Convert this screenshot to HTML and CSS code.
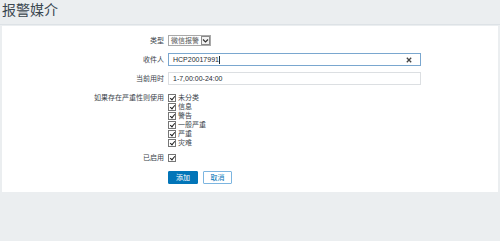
FILE: index.html
```html
<!DOCTYPE html>
<html lang="zh-CN">

<head>
    <meta charset="UTF-8">
    <meta name="viewport" content="width=device-width, initial-scale=1.0">
    <title>报警媒介</title>
    <link rel="stylesheet" href="styles.css">
</head>

<body>
    <header class="page-header">
        <h1>报警媒介</h1>
    </header>
    <div class="panel">
        <form class="media-form">
            <div class="row row-type">
                <label class="row-label">类型</label>
                <div class="select">
                    <span class="select-value">微信报警</span>
                    <span class="select-arrow">
                        <svg width="7" height="7" viewBox="0 0 7 7">
                            <path d="M1 2.5 L3.5 5 L6 2.5" fill="none" stroke="#333" stroke-width="1.2" />
                        </svg>
                    </span>
                </div>
            </div>
            <div class="row row-sendto">
                <label class="row-label">收件人</label>
                <div class="input input-active">
                    <span class="input-value">HCP20017991</span><span class="caret"></span>
                    <svg class="clear-icon" width="6" height="6" viewBox="0 0 6 6">
                        <path d="M0.8 0.8 L5.2 5.2 M5.2 0.8 L0.8 5.2" stroke="#444" stroke-width="1.3" />
                    </svg>
                </div>
            </div>
            <div class="row row-period">
                <label class="row-label">当前用时</label>
                <div class="input">
                    <span class="input-value">1-7,00:00-24:00</span>
                </div>
            </div>
            <div class="row row-severity">
                <label class="row-label">如果存在严重性则使用</label>
                <ul class="check-list">
                    <li><span class="check"></span>未分类</li>
                    <li><span class="check"></span>信息</li>
                    <li><span class="check"></span>警告</li>
                    <li><span class="check"></span>一般严重</li>
                    <li><span class="check"></span>严重</li>
                    <li><span class="check"></span>灾难</li>
                </ul>
            </div>
            <div class="row row-enabled">
                <label class="row-label">已启用</label>
                <span class="check"></span>
            </div>
            <div class="row row-buttons">
                <span class="row-label"></span>
                <button type="button" class="btn btn-primary">添加</button>
                <button type="button" class="btn btn-alt">取消</button>
            </div>
        </form>
    </div>
</body>

</html>
```

FILE: styles.css
```css
body {
    font-family: "Liberation Sans", "Noto Sans CJK SC", sans-serif;
    background-color: #ebeef0;
    color: #1f2c33;
    margin: 0;
    padding: 0;
}

.page-header {
    height: 24px;
    border-bottom: 1px solid #dde2e6;
}

.page-header h1 {
    margin: 0;
    padding: 1px 0 0 2px;
    font-size: 14px;
    font-weight: normal;
    line-height: 18px;
    color: #3b4750;
}

.panel {
    background-color: #fff;
    margin: 1px 2px 0 2px;
    padding: 9px 0 8px 0;
}

.media-form {
    font-size: 7px;
    color: #3a444b;
}

.row {
    display: flex;
    align-items: center;
    gap: 4px;
}

.row-label {
    width: 162px;
    text-align: right;
    flex: 0 0 162px;
    line-height: 9px;
}

.row-type {
    margin-bottom: 7px;
}

.row-sendto {
    margin-bottom: 6px;
}

.row-period {
    margin-bottom: 8px;
}

.row-severity {
    align-items: flex-start;
    margin-bottom: 6px;
}

.row-severity .row-label {
    margin-top: 0;
}

.row-enabled {
    margin-bottom: 9px;
}

.select {
    display: flex;
    align-items: center;
    height: 11px;
    box-sizing: border-box;
    border: 1px solid #a9a9a9;
    padding-left: 2px;
    gap: 2px;
}

.select-value {
    color: #555;
    line-height: 9px;
}

.select-arrow {
    display: flex;
    align-items: center;
    justify-content: center;
    width: 9px;
    height: 9px;
    box-sizing: border-box;
    border: 1px solid #8a8a8a;
    background-color: #f2f2f2;
}

.input {
    position: relative;
    display: flex;
    align-items: center;
    width: 253px;
    height: 13px;
    box-sizing: border-box;
    border: 1px solid #dcdfe2;
    padding-left: 4px;
}

.input-active {
    border-color: #7aa7cf;
}

.input-value {
    color: #1f2c33;
    line-height: 9px;
}

.caret {
    display: inline-block;
    width: 1px;
    height: 8px;
    background-color: #1f2c33;
}

.clear-icon {
    position: absolute;
    right: 8px;
    top: 3px;
}

.check-list {
    list-style: none;
    margin: 0;
    padding: 0;
}

.check-list li {
    display: flex;
    align-items: center;
    gap: 2px;
    height: 9px;
    line-height: 9px;
}

.check {
    position: relative;
    display: inline-block;
    width: 8px;
    height: 8px;
    box-sizing: border-box;
    border: 1px solid #767676;
    background-color: #fff;
}

.check::after {
    content: "";
    position: absolute;
    left: 2px;
    top: 0;
    width: 2px;
    height: 4px;
    border-right: 1.5px solid #222;
    border-bottom: 1.5px solid #222;
    transform: rotate(40deg);
}

.btn {
    font-family: "Liberation Sans", "Noto Sans CJK SC", sans-serif;
    font-size: 7px;
    height: 13px;
    padding: 0 6px;
    border-radius: 1px;
    cursor: pointer;
    line-height: 9px;
}

.btn-primary {
    background-color: #0275b8;
    border: 1px solid #0275b8;
    color: #fff;
    width: 30px;
}

.btn-alt {
    background-color: #fff;
    border: 1px solid #7cb5e0;
    color: #0275b8;
    width: 29px;
    margin-left: 1px;
}
```
